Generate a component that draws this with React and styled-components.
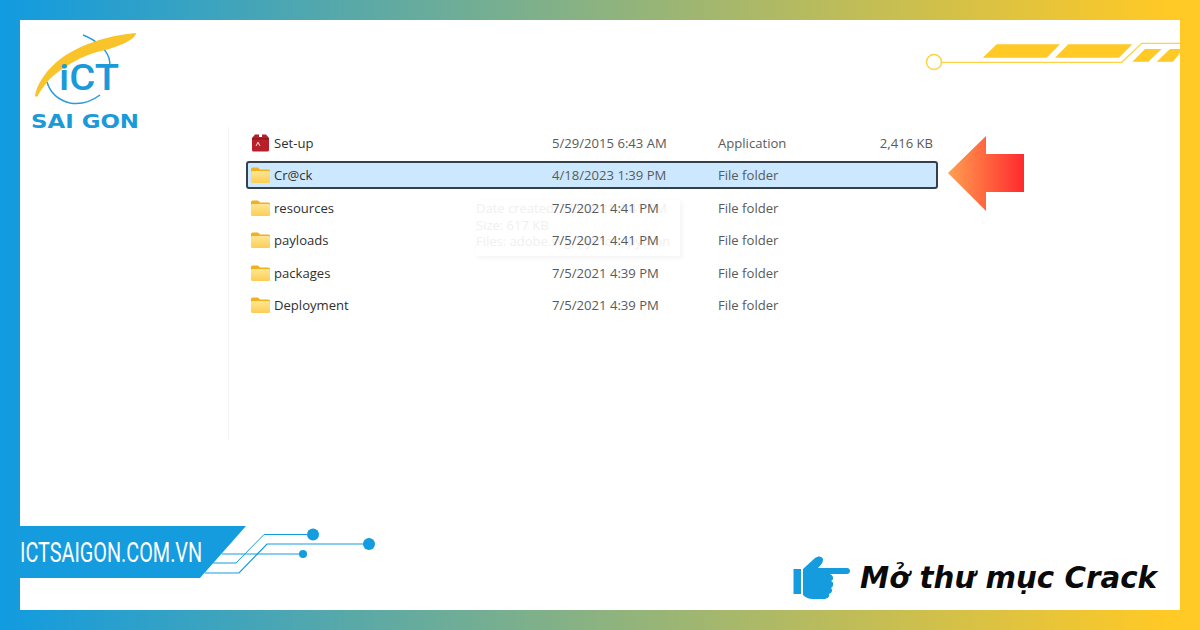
import React from 'react';
import styled, { createGlobalStyle } from 'styled-components';

const Global = createGlobalStyle`
  html, body {
    margin: 0;
    padding: 0;
    background: #fff;
  }
`;

const Frame = styled.div`
  width: 1200px;
  height: 630px;
  box-sizing: border-box;
  padding: 20px;
  background: linear-gradient(90deg, #119be0 0%, #ffc926 97%);
  overflow: hidden;
`;

const Panel = styled.div`
  height: 100%;
  background: #fff;
  display: flex;
  flex-direction: column;
`;

const TopBar = styled.header`
  height: 107px;
  flex: none;
  display: flex;
  justify-content: space-between;
  align-items: flex-start;
`;

const Corner = styled.svg`
  margin-top: 20px;
  display: block;
`;

const Main = styled.main`
  flex: 1;
  padding-left: 208px;
`;

const Pane = styled.div`
  position: relative;
  height: 313px;
  padding-left: 17px;
  border-left: 1px solid #f4f5f6;
  display: flex;
  align-items: flex-start;
`;

const FileList = styled.div`
  width: 692px;
  padding-top: 2px;
  display: flex;
  flex-direction: column;
  gap: 4.4px;
  font-family: "Open Sans", "Noto Sans", sans-serif;
  font-size: 13.1px;
`;

const Row = styled.div`
  position: relative;
  z-index: 1;
  height: 28px;
  box-sizing: border-box;
  padding: 0 3px;
  display: grid;
  grid-template-columns: 23px 278px 166px 110px 105px;
  align-items: center;
  border: 2px solid ${(p) => (p.$selected ? '#34404c' : 'transparent')};
  border-radius: 3px;
  background: ${(p) => (p.$selected ? '#cce8ff' : 'transparent')};
`;

const Name = styled.span`
  color: #2f2f2f;
`;

const Meta = styled.span`
  color: #5a5a5a;
  text-align: ${(p) => (p.$right ? 'right' : 'left')};
`;

const Tooltip = styled.div`
  position: absolute;
  left: 247px;
  top: 73px;
  width: 204px;
  height: 56px;
  background: #fff;
  box-shadow: 2px 2px 5px rgba(0, 0, 0, 0.05);
  font-family: "Open Sans", "Noto Sans", sans-serif;
  font-size: 13px;
  line-height: 16.5px;
  color: #f0f0f0;
  white-space: nowrap;
  overflow: hidden;
`;

const Pointer = styled.svg`
  flex: none;
  display: block;
  margin: 9px 0 0 10px;
`;

const Footer = styled.footer`
  height: 84px;
  flex: none;
  display: flex;
  align-items: flex-start;
`;

const Banner = styled.div`
  width: 226px;
  height: 52px;
  flex: none;
  background: #149cdf;
  clip-path: polygon(0 0, 100% 0, 180px 100%, 0 100%);
  display: flex;
  align-items: center;
`;

const Site = styled.span`
  font-family: Roboto, "Liberation Sans", sans-serif;
  font-size: 28px;
  font-weight: 400;
  color: #fff;
  white-space: nowrap;
  transform: scaleX(0.708);
  transform-origin: left center;
`;

const Circuit = styled.svg`
  flex: none;
  display: block;
  margin-left: -46px;
`;

const Caption = styled.div`
  margin-left: auto;
  margin-right: 23px;
  margin-top: 29px;
  display: flex;
  align-items: center;
  gap: 9px;
`;

const CaptionText = styled.span`
  font-family: "DejaVu Sans", Inter, sans-serif;
  font-size: 29.3px;
  font-weight: 700;
  font-style: italic;
  color: #0a0a0a;
  white-space: nowrap;
`;

const FolderIcon = ({ id }) => (
  <svg width="19" height="16" viewBox="0 0 19 16">
    <defs>
      <linearGradient id={id} x1="0" y1="0" x2="0" y2="1">
        <stop offset="0" stopColor="#ffe693" />
        <stop offset="1" stopColor="#fbcd55" />
      </linearGradient>
    </defs>
    <path d="M0 2a1.500 1.500 0 0 1 1.500-1.500H7L9 2.500h8.500A1.500 1.500 0 0 1 19 4v2H0z" fill="#f0b020" />
    <rect x="0" y="4" width="19" height="12" rx="1.500" fill={`url(#${id})`} />
  </svg>
);

const SetupIcon = () => (
  <svg width="19" height="18" viewBox="0 0 19 18">
    <path d="M1 4 4 0.500h4V3h3V0.500h4l3 3.500v12a1.500 1.500 0 0 1-1.500 1.500h-14A1.500 1.500 0 0 1 1 16z" fill="#b7202a" />
    <path d="M1 4h17v1.500H1z" fill="#96151c" />
    <path d="M4.500 12 6.500 8h1L9.500 12h-1L7 9.500 5.500 12z" fill="#f3c4c4" />
  </svg>
);

const Logo = () => (
  <svg width="140" height="112" viewBox="0 0 140 112">
    <path d="M63 15C76 20 86 29 89 38C90 42 90 45 90 48" fill="none" stroke="#2a9bd8" strokeWidth="1.500" />
    <path d="M27 62C30 72 38 80 50 83C62 85 72 81 80 75" fill="none" stroke="#2a9bd8" strokeWidth="1.500" />
    <path d="M15 76C17 62 30 46 43 37C58 27 82 16 116 13C116 19 100 27 77 32C62 36 46 45 33 56C26 62 21 70 17 77z" fill="#f9c32a" />
    <text x="39" y="70" fontFamily="Roboto, sans-serif" fontSize="37" fontWeight="500" fill="#1a9ad9" textLength="60" lengthAdjust="spacingAndGlyphs">iCT</text>
    <text x="11" y="107.500" fontFamily="'DejaVu Sans', sans-serif" fontSize="19" fontWeight="700" fill="#1a9ad9" textLength="108" lengthAdjust="spacingAndGlyphs">SAI GON</text>
  </svg>
);

const files = [
  { name: 'Set-up', date: '5/29/2015 6:43 AM', type: 'Application', size: '2,416 KB', setup: true },
  { name: 'Cr@ck', date: '4/18/2023 1:39 PM', type: 'File folder', selected: true },
  { name: 'resources', date: '7/5/2021 4:41 PM', type: 'File folder' },
  { name: 'payloads', date: '7/5/2021 4:41 PM', type: 'File folder' },
  { name: 'packages', date: '7/5/2021 4:39 PM', type: 'File folder' },
  { name: 'Deployment', date: '7/5/2021 4:39 PM', type: 'File folder' },
];

const App = () => (
  <>
    <Global />
    <Frame>
      <Panel>
        <TopBar>
          <Logo />
          <Corner width="260" height="35" viewBox="0 0 260 35">
            <circle cx="14" cy="22" r="7.500" fill="#fff" stroke="#fdd244" strokeWidth="1.500" />
            <path d="M22 22.300H201.700L221.700 3.300H260" fill="none" stroke="#fdd244" strokeWidth="1.300" />
            <path d="M62.700 17.700 76.700 4.300H140L126.700 17.700z" fill="#ffc926" />
            <path d="M135 17.700 148.300 4.300H212.300L199 17.700z" fill="#ffc926" />
            <path d="M212.300 21.700 225 9H241.700L228.300 21.700z" fill="#ffc926" />
            <path d="M236.700 21.700 250 9H260V13L253 21.700z" fill="#ffc926" />
          </Corner>
        </TopBar>
        <Main>
          <Pane>
            <Tooltip>
              Date created: 7/5/2021 4:41 PM
              <br />
              Size: 617 KB
              <br />
              Files: adobe.svg, python, python
            </Tooltip>
            <FileList>
              {files.map((f, i) => (
                <Row key={f.name} $selected={f.selected}>
                  {f.setup ? <SetupIcon /> : <FolderIcon id={`folder-${i}`} />}
                  <Name>{f.name}</Name>
                  <Meta>{f.date}</Meta>
                  <Meta>{f.type}</Meta>
                  <Meta $right>{f.size}</Meta>
                </Row>
              ))}
            </FileList>
            <Pointer width="76" height="75" viewBox="0 0 76 75">
              <defs>
                <linearGradient id="pointer-fill" x1="0" y1="0" x2="1" y2="0">
                  <stop offset="0" stopColor="#ffa050" />
                  <stop offset="1" stopColor="#ff2a2e" />
                </linearGradient>
              </defs>
              <path d="M0 37 38 0V18H76V56H38V75z" fill="url(#pointer-fill)" />
            </Pointer>
          </Pane>
        </Main>
        <Footer>
          <Banner>
            <Site>ICTSAIGON.COM.VN</Site>
          </Banner>
          <Circuit width="180" height="52" viewBox="0 0 180 52">
            <g fill="none" stroke="#149cdf" strokeWidth="1">
              <path d="M13 37H36L64 8.500H110" />
              <path d="M5 47H39L67 18H166" strokeWidth="1.200" />
              <path d="M22 28H100" />
            </g>
            <circle cx="113" cy="8.500" r="6" fill="#149cdf" />
            <circle cx="169" cy="18" r="6" fill="#149cdf" />
            <circle cx="103" cy="28" r="4" fill="#149cdf" />
          </Circuit>
          <Caption>
            <svg width="58" height="46" viewBox="0 0 58 46">
              <rect x="0.500" y="14" width="7.500" height="25" fill="#149cdf" />
              <path d="M10 14 22 3C25 0.500 29 1 30 4C30.500 7 28 10 25 13H54C58 13 58 19 54 19H37C41 21 41 25 38 26C41 27 41 31 38 33C40 35 39 38 36 39C37 42 34 44 30 44H20C15 44 12 42 10 40z" fill="#149cdf" />
            </svg>
            <CaptionText>Mở thư mục Crack</CaptionText>
          </Caption>
        </Footer>
      </Panel>
    </Frame>
  </>
);

export default App;
